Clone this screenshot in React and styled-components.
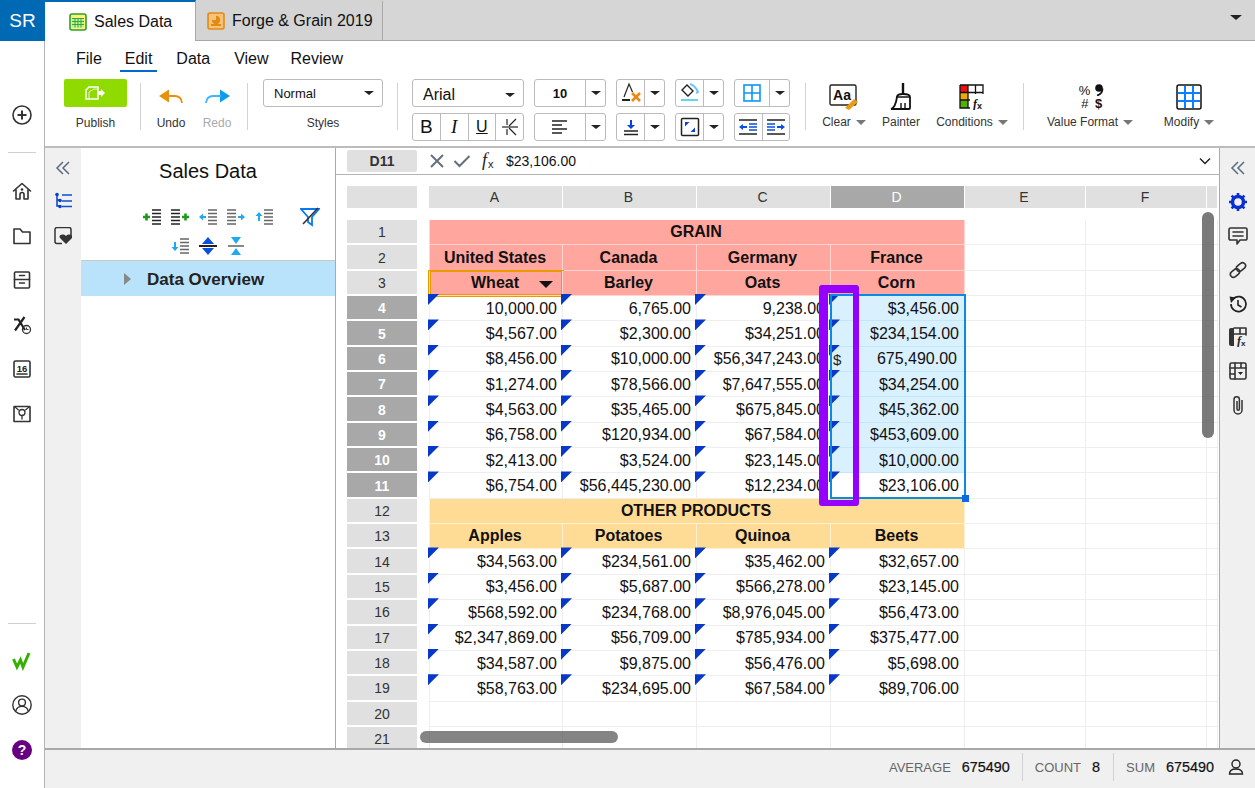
import React from "react";
import styled, { createGlobalStyle } from "styled-components";

const Global = createGlobalStyle`
  html, body { margin: 0; padding: 0; background: #fff; }
  body { font-family: "Liberation Sans", Arial, sans-serif; color: #111; }
  * { box-sizing: border-box; }
  svg { display: block; flex: none; }
`;

const Page = styled.div`display:flex;width:1255px;height:788px;overflow:hidden;background:#fff;`;
const Rail = styled.nav`width:45px;flex:none;display:flex;flex-direction:column;align-items:center;border-right:1px solid #b4b4b4;`;
const Brand = styled.div`width:45px;height:41px;margin-right:-1px;background:#0069b4;color:#fff;font-size:19px;display:flex;align-items:center;justify-content:center;flex:none;`;
const RailGroup = styled.div`display:flex;flex-direction:column;align-items:center;gap:${p => p.$gap || 0}px;margin-top:${p => p.$top || 0}px;`;
const RailRule = styled.div`width:28px;height:1px;background:#d0d0d0;margin-top:${p => p.$top}px;`;
const Main = styled.div`flex:1;min-width:0;display:flex;flex-direction:column;`;
const TabBar = styled.div`height:41px;flex:none;display:flex;background:#d6d6d6;position:relative;`;
const Tab = styled.div`height:41px;display:flex;align-items:center;gap:7px;font-size:16px;width:${p => p.$w}px;padding-left:${p => p.$pad}px;color:#111;white-space:nowrap;
  background:${p => (p.$active ? "#fff" : "#d4d4d4")};
  border-top:2px solid ${p => (p.$active ? "#0069b4" : "#d4d4d4")};
  border-right:1px solid #a8a8a8;
  border-bottom:${p => (p.$active ? "none" : "1px solid #a8a8a8")};`;
const TabFill = styled.div`flex:1;border-bottom:1px solid #a8a8a8;display:flex;justify-content:flex-end;align-items:center;padding:0 13px 6px 0;`;
const Ribbon = styled.header`height:107px;flex:none;border-bottom:2px solid #bcbcbc;`;
const Menu = styled.div`display:flex;height:31px;padding:4px 0 0 31px;gap:0;font-size:16px;`;
const MenuItem = styled.div`height:27px;line-height:27px;margin-right:${p => p.$mr}px;padding:0 ${p => (p.$on ? 5 : 0)}px;margin-left:${p => (p.$on ? -5 : 0)}px;border-bottom:${p => (p.$on ? "2px solid #0069d0" : "none")};`;
const Tools = styled.div`display:flex;align-items:flex-start;padding:7px 0 0 19px;`;
const Sep = styled.div`width:1px;height:47px;background:#d2d2d2;margin:4px ${p => p.$r}px 0 ${p => p.$l}px;flex:none;`;
const Section = styled.div`width:${p => p.$w}px;margin-left:${p => p.$ml || 0}px;display:flex;flex-direction:column;align-items:center;flex:none;`;
const PublishButton = styled.div`width:63px;height:28px;background:#8fdb00;border-radius:2px;display:flex;align-items:center;justify-content:center;`;
const ToolLabel = styled.div`font-size:12px;color:${p => p.$dim ? "#aaa" : "#333"};white-space:nowrap;margin-top:${p => p.$top ?? 9}px;display:flex;align-items:center;gap:5px;`;
const IconSlot = styled.div`height:${p => p.$h || 30}px;margin-top:${p => p.$top || 0}px;display:flex;align-items:center;justify-content:center;`;
const SmallCaret = styled.span`width:0;height:0;border-left:5px solid transparent;border-right:5px solid transparent;border-top:5px solid #777;`;
const Caret = styled.span`width:0;height:0;border-left:${p => p.$s || 5}px solid transparent;border-right:${p => p.$s || 5}px solid transparent;border-top:${p => p.$s ? p.$s - 1 : 4}px solid #222;`;
const SelectBox = styled.div`width:120px;height:28px;border:1px solid #bbb;border-radius:3px;display:flex;align-items:center;justify-content:space-between;padding:0 8px 0 10px;font-size:13px;`;
const FormatGrid = styled.div`display:grid;grid-template-columns:112px 72px 49px 49px 56px;grid-auto-rows:28px;column-gap:10px;row-gap:6px;flex:none;`;
const BoxGroup = styled.div`display:flex;height:28px;border:1px solid #bbb;border-radius:3px;`;
const BoxCell = styled.div`flex:${p => (p.$w ? `0 0 ${p.$w}px` : 1)};display:flex;align-items:center;justify-content:center;font-size:${p => p.$fs || 13}px;font-weight:${p => p.$b ? 700 : 400};&+&{border-left:1px solid #bbb;}`;
const FontBox = styled(BoxGroup)`justify-content:space-between;align-items:center;padding:3px 8px 0 10px;font-size:16px;`;
const ItalicI = styled.span`font-family:"Liberation Serif",serif;font-style:italic;font-size:19px;`;
const UnderU = styled.span`text-decoration:underline;`;
const Body = styled.div`flex:1;min-height:0;display:flex;`;
const SubRail = styled.div`width:36px;flex:none;background:#f0f0f0;display:flex;flex-direction:column;align-items:center;padding-top:13px;gap:17px;`;
const TreePanel = styled.aside`width:255px;flex:none;background:#fff;border-right:1px solid #aaa;`;
const TreeTitle = styled.div`font-size:20px;text-align:center;height:36px;padding-top:11px;line-height:24px;color:#111;`;
const TreeRow = styled.div`display:flex;align-items:center;height:20px;gap:8px;margin-top:${p => p.$top}px;padding-left:${p => p.$pad || 0}px;justify-content:${p => p.$center ? "center" : "flex-start"};`;
const FilterGap = styled.div`margin-left:18px;`;
const TreeItem = styled.div`height:36px;margin-top:4px;background:#b9e3fb;border-top:1px solid #c9c9c9;display:flex;align-items:center;padding:3px 0 0 43px;gap:16px;font-size:17px;font-weight:700;color:#222;`;
const TreeArrow = styled.span`width:0;height:0;border-top:6px solid transparent;border-bottom:6px solid transparent;border-left:7px solid #888;margin-top:-2px;`;
const SheetPane = styled.main`flex:1;min-width:0;display:flex;flex-direction:column;`;
const FormulaBar = styled.div`height:27px;flex:none;display:flex;align-items:center;padding:2px 8px 2px 11px;border-bottom:1px solid #b4b4b4;font-size:14px;`;
const NameBox = styled.div`width:70px;height:22px;background:#e0e0e0;border-radius:2px;font-weight:700;font-size:14px;color:#333;display:flex;align-items:center;justify-content:center;margin-right:12px;`;
const FormulaIcons = styled.div`display:flex;align-items:center;gap:8px;margin-right:9px;`;
const FormulaValue = styled.div`flex:1;`;
const Canvas = styled.div`flex:1;min-height:0;position:relative;overflow:hidden;padding:11px 0 0 11px;`;
const ColRow = styled.div`display:grid;grid-template-columns:82px 134px 134px 134px 134px 121px 121px 11px;height:22px;margin-bottom:12px;`;
const Corner = styled.div`width:70px;background:#e0e0e0;`;
const ColHead = styled.div`background:${p => p.$sel ? "#a8a8a8" : "#e0e0e0"};margin-right:1px;display:flex;align-items:center;justify-content:center;font-size:14px;padding-right:2px;color:${p => p.$sel ? "#fff" : "#333"};`;
const Row = styled.div`display:grid;grid-template-columns:82px 134px 134px 134px 134px 121px 121px 11px;height:25.35px;`;
const RowHead = styled.div`width:70px;height:100%;padding-top:1px;border-bottom:2px solid #fff;background:${p => p.$sel ? "#a8a8a8" : "#e0e0e0"};color:${p => p.$sel ? "#fff" : "#333"};font-size:14px;display:flex;align-items:center;justify-content:center;${p => p.$sel ? "font-weight:700;" : ""}`;
const fills = { pink: "#ffa69f", gold: "#ffdc96", sel: "#d9f0ff" };
const lineColor = p => p.$fill === "pink" ? "#ffd5d1" : p.$fill === "gold" ? "#fff0d2" : p.$fill === "sel" ? "#c4e6fb" : "#eee";
const Cell = styled.div`position:relative;min-width:0;white-space:nowrap;font-size:16px;display:flex;align-items:center;
  padding:${p => p.$num ? "1px 5px 0 0" : "0 2px 0 0"};
  justify-content:${p => p.$num ? "flex-end" : "center"};
  font-weight:${p => p.$head ? 700 : 400};
  grid-column:${p => p.$span ? `span ${p.$span}` : "auto"};
  background:${p => fills[p.$fill] || "transparent"};
  border-right:1px solid ${lineColor};
  border-bottom:1px solid ${lineColor};
  ${p => p.$first ? `border-left:1px solid ${lineColor(p)};` : ""}
  ${p => p.$active ? "box-shadow:0 0 0 1px #e89a00, inset 0 0 0 1px #e89a00;" : ""}`;
const Flag = styled.span`position:absolute;left:-2px;top:-2px;width:11px;height:11px;background:#0838c8;clip-path:polygon(0 0,100% 0,0 100%);z-index:1;`;
const Currency = styled.span`position:absolute;left:2px;font-size:15px;color:#222;`;
const Acct = styled.span`margin-right:2px;`;
const DropCaret = styled.span`position:absolute;right:9px;top:10px;width:0;height:0;border-left:7px solid transparent;border-right:7px solid transparent;border-top:7px solid #111;`;
const Selection = styled.div`position:absolute;left:494px;top:119px;width:136px;height:205px;border:2px solid #0a8ae0;pointer-events:none;z-index:2;`;
const Handle = styled.span`position:absolute;right:-5px;bottom:-5px;width:7px;height:7px;background:#0a6ae8;`;
const Marker = styled.div`position:absolute;left:483px;top:110px;width:40px;height:221px;border-style:solid;border-color:#9500ff;border-width:8px 6px 6px 9px;border-radius:3px;pointer-events:none;z-index:3;`;
const VScroll = styled.div`position:absolute;left:866px;top:37px;width:12px;height:226px;background:rgba(85,85,85,.78);border-radius:6px;z-index:4;`;
const HScroll = styled.div`position:absolute;left:84px;top:556px;width:198px;height:12px;background:rgba(85,85,85,.72);border-radius:6px;z-index:4;`;
const RightRail = styled.div`width:36px;flex:none;background:#f0f0f0;border-left:1px solid #aaa;display:flex;flex-direction:column;align-items:center;padding-top:3px;`;
const RightSlot = styled.div`height:33.9px;flex:none;display:flex;align-items:center;justify-content:center;`;
const Status = styled.footer`height:40px;flex:none;background:#f0f0f0;border-top:2px solid #a8a8a8;display:flex;align-items:center;justify-content:flex-end;padding:0 11px 4px 0;font-size:14px;`;
const StatLabel = styled.span`color:#666;font-size:13px;margin-right:11px;`;
const StatValue = styled.span`color:#111;font-size:14.4px;font-weight:500;-webkit-text-stroke:.2px #111;margin-right:${p => p.$mr}px;`;
const StatRule = styled.span`width:1px;height:28px;background:#d0d0d0;margin-right:12px;`;
const ValueGrid = styled.div`display:grid;grid-template-columns:16px 10px;column-gap:1px;grid-auto-rows:13px;font-size:13px;line-height:13px;color:#111;justify-items:center;`;
const ValueItalic = styled.span`font-style:italic;`;
const ValueBold = styled.span`font-weight:700;`;

const S = ({ w = 24, h = 24, vb, children }) => <svg width={w} height={h} viewBox={vb || `0 0 ${w} ${h}`} fill="none">{children}</svg>;
const line = { stroke: "#333", strokeWidth: 1.6, strokeLinecap: "round", strokeLinejoin: "round" };

const PlusCircle = () => <S w={22} h={22}><circle cx="11" cy="11" r="9" {...line} stroke="#333"/><path d="M11 6.5v9M6.5 11h9" stroke="#333" strokeWidth="2"/></S>;
const Home = () => <S w={20} h={20}><path d="M1.5 10 10 2.5 18.5 10M4 8.5V18h4v-4.5a2 2 0 0 1 4 0V18h4V8.5" {...line}/><circle cx="10" cy="8.5" r="1.3" fill="#333"/></S>;
const Folder = () => <S w={20} h={20}><path d="M2 3h6l2.5 3H18v11.5H2z" {...line}/></S>;
const Archive = () => <S w={20} h={20}><rect x="2.5" y="2" width="15" height="16" rx="1" {...line}/><path d="M2.5 9.5h15M7.5 5.5h5M7.5 13h5" {...line}/></S>;
const XClock = () => <S w={20} h={20}><path d="M2 4.5h4.5L13 15M12.5 2 3 15.5" stroke="#222" strokeWidth="2.2"/><circle cx="14.5" cy="14.5" r="4" stroke="#333" strokeWidth="1.3"/><path d="M14.5 12.5v2h2" stroke="#333"/></S>;
const Cal16 = () => <S w={20} h={20}><rect x="2" y="2" width="16" height="16" rx="1.5" {...line}/><text x="10" y="12.5" textAnchor="middle" fontSize="9.5" fontWeight="700" fill="#222" fontFamily="Liberation Sans">16</text><path d="M5 15h10" {...line}/></S>;
const Bulb = () => <S w={20} h={20}><path d="M2.5 2.5h15a.5.5 0 0 1 .5.5v14.5H2V3a.5.5 0 0 1 .5-.5z" {...line}/><path d="M3 3l3.5 3M17 3l-3.5 3" {...line} strokeWidth="1.1"/><circle cx="10" cy="8.5" r="3" {...line} strokeWidth="1.3"/><path d="M10 11.5V15" {...line} strokeWidth="1.3"/></S>;
const WLogo = () => <S w={20} h={20}><path d="M1.5 8 5 16l3.5-7L11 16l6-14" stroke="#35b000" strokeWidth="3"/></S>;
const UserCircle = () => <S w={22} h={22}><circle cx="11" cy="11" r="9.2" stroke="#333" strokeWidth="1.4"/><circle cx="11" cy="8.5" r="3.4" stroke="#333" strokeWidth="1.4"/><path d="M4.8 17c1-3.5 3.5-4.6 6.2-4.6s5.2 1.1 6.2 4.6" stroke="#333" strokeWidth="1.4"/></S>;
const Help = () => <S w={22} h={22}><circle cx="11" cy="11" r="10" fill="#660080"/><text x="11" y="16" textAnchor="middle" fontSize="14" fontWeight="700" fill="#fff" fontFamily="Liberation Sans">?</text></S>;
const SheetTab = () => <S w={18} h={18}><rect x="1" y="1" width="16" height="16" rx="2" fill="#fff27a" stroke="#2ca02c" strokeWidth="1.6"/><path d="M3 5.5h12v9H3z" fill="#bff0a0"/><path d="M3 5.5h12M3 8.5h12M3 11.5h12M6 5.5v9M9 5.5v9M12 5.5v9" stroke="#2ca02c" strokeWidth=".9"/></S>;
const SlideTab = () => <S w={18} h={18}><rect x="1" y="1" width="16" height="16" rx="2" fill="#f6c27e" stroke="#e38a10" strokeWidth="1.6"/><path d="M9 8V3.8A4.2 4.2 0 1 1 4.8 8z" fill="#e38a10"/><path d="M4 13h10" stroke="#e38a10" strokeWidth="2"/></S>;
const TabChevron = () => <Caret $s={6} />;
const PublishIcon = () => <S w={22} h={14}><path d="M1 13V4l3-3h9v12z" stroke="#fff" strokeWidth="1.5"/><path d="M4 13V6l5-3h4" stroke="#fff" strokeWidth=".8"/><path d="M13 5v4h3v2l4-4-4-4v2z" fill="#fff"/></S>;
const Undo = () => <S w={26} h={18}><path d="M1 8l10-6.500v13z" fill="#e8900a"/><path d="M9 8h8c4 0 6.500 2.500 7 7" stroke="#e8900a" strokeWidth="1.800"/></S>;
const Redo = () => <S w={27} h={18}><path d="M26 8l-10-6.500v13z" fill="#0a9bf5"/><path d="M17 8H9c-4 0-6.500 2.500-7 7" stroke="#38b6ff" strokeWidth="1.800"/></S>;
const ClearFormat = () => <S w={24} h={22}><path d="M5 15 10 2l3.500 8" stroke="#222" strokeWidth="1.200"/><path d="M3 18h8" stroke="#222" strokeWidth="2"/><path d="M13 11l8 8M21 11l-8 8" stroke="#ea8a12" strokeWidth="2.600"/></S>;
const FillBucket = () => <S w={24} h={22}><path d="M9 3l6 6-5 5-6-6z" stroke="#222" strokeWidth="1.400"/><path d="M12 2c3 1 6 3 8 8l-2 1" stroke="#6fc6f2" strokeWidth="2"/><path d="M3 18h17" stroke="#67d3ef" strokeWidth="2"/></S>;
const GridIcon = () => <S w={20} h={20}><rect x="2" y="2" width="16" height="16" stroke="#0a96ff" strokeWidth="1.600"/><path d="M10 2v16M2 10h16" stroke="#0a96ff" strokeWidth="1.600"/></S>;
const Strike = () => <S w={18} h={18}><path d="M6 1v6M6 11v6M15 1 8 8M8 10l7 7" stroke="#222" strokeWidth="1.200"/><path d="M1 9h16" stroke="#222" strokeWidth="1.200"/></S>;
const AlignLeft = () => <S w={18} h={16}><path d="M1 2h15M1 6h10M1 10h15M1 14h10" stroke="#222" strokeWidth="1.500"/></S>;
const VAlign = () => <S w={18} h={18}><path d="M9 2v6" stroke="#0a3fe0" strokeWidth="2"/><path d="M5 7h8l-4 4z" fill="#0a3fe0"/><path d="M2 13h14M2 16.500h14" stroke="#222" strokeWidth="1.500"/></S>;
const CornerBox = () => <S w={20} h={20}><rect x="1.500" y="1.500" width="17" height="17" rx="1" stroke="#222" strokeWidth="1.500"/><path d="M5 5h4.500L5 9.500z" fill="#0a3fe0"/><path d="M15 15h-4.500L15 10.500z" fill="#0a3fe0"/></S>;
const IndentL = () => <S w={20} h={18}><path d="M1 2h18M1 16h18" stroke="#222" strokeWidth="1.600"/><path d="M1 9l4-3v2h4v2H5v2z" fill="#0a50e0"/><path d="M11 6h8M11 9h8M11 12h8" stroke="#0a50e0" strokeWidth="1.400"/></S>;
const IndentR = () => <S w={20} h={18}><path d="M1 2h18M1 16h18" stroke="#222" strokeWidth="1.600"/><path d="M19 9l-4-3v2h-4v2h4v2z" fill="#0a50e0"/><path d="M1 6h8M1 9h8M1 12h8" stroke="#0a50e0" strokeWidth="1.400"/></S>;
const ClearBig = () => <S w={30} h={28}><rect x="1" y="2" width="26" height="20" rx="1.500" stroke="#222" strokeWidth="1.400"/><text x="13" y="17" textAnchor="middle" fontSize="14" fontWeight="700" fill="#111" fontFamily="Liberation Sans">Aa</text><path d="M16 25l9-9 4 3-9 8z" fill="#ea9a14"/></S>;
const Brush = () => <S w={24} h={28}><path d="M14 0v11" stroke="#111" strokeWidth="2.400"/><path d="M8 14c0-2 2-3 6-3s7 1 7 3v11a1 1 0 0 1-1 1H2c3-1 5-5 6-12z" stroke="#111" strokeWidth="1.800"/><path d="M8 14h13M12 20v6M16 20v6" stroke="#111" strokeWidth="1.400"/></S>;
const Conditions = () => <S w={26} h={26}><rect x="1" y="1" width="8" height="7.500" fill="#ee1010"/><rect x="1" y="8.500" width="8" height="7.500" fill="#f0a800"/><rect x="1" y="16" width="8" height="8" fill="#52b000"/><path d="M1 1h23v9M1 1v23h10M9 1v23M16.500 1v9M1 8.500h23M1 16h10" stroke="#111" strokeWidth="1.300"/><text x="14" y="24" fontSize="12" fontStyle="italic" fontWeight="700" fill="#111" fontFamily="Liberation Serif">f</text><text x="18" y="25" fontSize="9" fontWeight="700" fill="#111" fontFamily="Liberation Sans">x</text></S>;
const CommaMark = () => <S w={10} h={12}><circle cx="5" cy="4" r="3.800" fill="#111"/><path d="M8.500 4.500C8.500 8 6.500 10.500 3 11.500" stroke="#111" strokeWidth="1.800"/></S>;
const ValueFormat = () => <ValueGrid><span>%</span><CommaMark /><ValueItalic>#</ValueItalic><ValueBold>$</ValueBold></ValueGrid>;
const Modify = () => <S w={26} h={26}><rect x="1" y="1" width="24" height="24" rx="2" stroke="#111" strokeWidth="1.500"/><path d="M9 2v22M17 2v22M2 9h22M2 17h22" stroke="#0a80ff" strokeWidth="2"/></S>;
const Collapse = () => <S w={16} h={14}><path d="M8 1 2 7l6 6M14 1 8 7l6 6" stroke="#5a6a80" strokeWidth="1.500"/></S>;
const TreeList = () => <S w={18} h={18}><path d="M3 2v12h3M3 8h3" stroke="#0a3fc0" strokeWidth="1.500"/><path d="M8 3h10M8 9h10M8 14.500h10" stroke="#0a50d0" strokeWidth="1.500"/><circle cx="3" cy="2.500" r="1.800" fill="#0a3fc0"/><circle cx="6" cy="8.500" r="1.800" fill="#0a3fc0"/><circle cx="6" cy="14.500" r="1.800" fill="#0a3fc0"/></S>;
const Heart = () => <S w={18} h={18}><path d="M8 16.500H3a2 2 0 0 1-2-2v-12a2 2 0 0 1 2-2h12a2 2 0 0 1 2 2v6" stroke="#333" strokeWidth="1.500"/><path d="M12 17 6 11c-2-3 3-5 6-2 3-3 8-1 6 2z" fill="#333"/></S>;
const Row5 = ({ x = 10 }) => <path d={`M${x} 3h9M${x} 6.500h9M${x} 10h9M${x} 13.500h9M${x} 17h9`} stroke="#666" strokeWidth="1.300"/>;
const AddLeft = () => <S w={20} h={20}><path d="M10 3h9M10 6.500h9M10 10h9M10 13.500h9M10 17h9" stroke="#222" strokeWidth="1.400"/><path d="M4.500 6.500v7M1 10h7" stroke="#1c9a1c" strokeWidth="2.600"/></S>;
const AddRight = () => <S w={20} h={20}><path d="M1 3h9M1 6.500h9M1 10h9M1 13.500h9M1 17h9" stroke="#222" strokeWidth="1.400"/><path d="M15.500 6.500v7M12 10h7" stroke="#1c9a1c" strokeWidth="2.600"/></S>;
const MoveL = () => <S w={20} h={20}><Row5/><path d="M1 10l4-3.500V9h3v2H5v2.500z" fill="#20a8f0"/></S>;
const MoveR = () => <S w={20} h={20}><Row5 x={1}/><path d="M19 10l-4-3.500V9h-3v2h3v2.500z" fill="#20a8f0"/></S>;
const MoveU = () => <S w={20} h={20}><Row5/><path d="M5 5l3.500 4H6v5H4V9H1.500z" fill="#20a8f0"/></S>;
const MoveD = () => <S w={20} h={20}><Row5/><path d="M5 15l3.500-4H6V6H4v5H1.500z" fill="#20a8f0"/></S>;
const Expand = () => <S w={20} h={20}><path d="M1 10h18" stroke="#222" strokeWidth="2"/><path d="M10 1l6 7H4zM10 19l6-7H4z" fill="#0a50e0"/></S>;
const Shrink = () => <S w={20} h={20}><path d="M2 10h16" stroke="#888" strokeWidth="2"/><path d="M10 8 5 1h10zM10 12l5 7H5z" fill="#20a8f0"/></S>;
const FilterOff = () => <S w={20} h={20}><path d="M1 2h18l-7 8v8l-4-3v-5z" stroke="#0a78f0" strokeWidth="1.800"/><path d="M18 1 3 17" stroke="#333" strokeWidth="1.600"/></S>;
const Xmark = () => <S w={16} h={16}><path d="M2 2l12 12M14 2 2 14" stroke="#66707c" strokeWidth="2"/></S>;
const Check = () => <S w={18} h={16}><path d="M1.500 8 6.500 13 16.500 3" stroke="#66707c" strokeWidth="2"/></S>;
const Fx = () => <S w={18} h={20}><text x="3" y="15" fontSize="18" fontStyle="italic" fill="#222" fontFamily="Liberation Serif">f</text><text x="9" y="17" fontSize="11" fill="#222" fontFamily="Liberation Sans">x</text></S>;
const Chevron = () => <S w={12} h={8}><path d="M1 1.500l5 5 5-5" stroke="#222" strokeWidth="1.500"/></S>;
const Gear = () => <S w={20} h={20}><circle cx="10" cy="10" r="5.500" stroke="#0a2fd0" strokeWidth="3.500"/><path d="M10 1v3M10 16v3M1 10h3M16 10h3M3.600 3.600l2 2M14.400 14.400l2 2M16.400 3.600l-2 2M5.600 14.400l-2 2" stroke="#0a2fd0" strokeWidth="2.600"/></S>;
const Comment = () => <S w={20} h={20}><path d="M2.500 2h15A1.500 1.500 0 0 1 19 3.500v9a1.500 1.500 0 0 1-1.500 1.500H12l-3 4v-4H2.500A1.500 1.500 0 0 1 1 12.500v-9A1.500 1.500 0 0 1 2.500 2z" {...line}/><path d="M5 6h10M5 10h10" {...line}/></S>;
const Link = () => <S w={18} h={18}><rect x="1" y="9" width="10" height="6" rx="3" transform="rotate(-40 6 12)" {...line}/><rect x="7" y="3" width="10" height="6" rx="3" transform="rotate(-40 12 6)" {...line}/></S>;
const History = () => <S w={20} h={20}><path d="M3 10a7.500 7.500 0 1 0 2.500-5.500" stroke="#222" strokeWidth="1.700"/><path d="M1.500 2.500l6.500 1L3 9z" fill="#222"/><path d="M10 6v5l3.500 2" stroke="#222" strokeWidth="1.600"/></S>;
const FxTable = () => <S w={20} h={20}><path d="M1 3a2 2 0 0 1 2-2h3v18H3a2 2 0 0 1-2-2z" fill="#333"/><path d="M6 1h12v7M6 7h12M12 1v6" {...line}/><text x="9" y="18" fontSize="12" fontWeight="700" fontStyle="italic" fill="#222" fontFamily="Liberation Serif">f</text><text x="13" y="19" fontSize="8" fontWeight="700" fill="#222" fontFamily="Liberation Sans">x</text></S>;
const TableDrop = () => <S w={18} h={18}><rect x="1" y="1" width="16" height="16" rx="1.500" {...line}/><path d="M1 6h16M1 12h4M6 1v16M12 1v5" {...line}/><path d="M9 10h5l-2.500 3z" fill="#222"/></S>;
const Clip = () => <S w={14} h={20}><path d="M11 5v10a4 4 0 0 1-8 0V4.500a2.700 2.700 0 0 1 5.400 0V14a1.200 1.200 0 0 1-2.400 0V6" stroke="#333" strokeWidth="1.500"/></S>;
const User = () => <S w={16} h={16}><circle cx="8" cy="5" r="4" stroke="#222" strokeWidth="1.400"/><path d="M1.500 15c0-4 3-5 6.500-5s6.500 1 6.500 5z" stroke="#222" strokeWidth="1.400"/></S>;

const D = (a, b, c, d) => [a, b, c, d];
const rows = [
  { n: 1, type: "band", fill: "pink", text: "GRAIN" },
  { n: 2, type: "head", fill: "pink", cols: ["United States", "Canada", "Germany", "France"] },
  { n: 3, type: "head", fill: "pink", cols: ["Wheat", "Barley", "Oats", "Corn"] },
  { n: 4, cols: D("10,000.00", "6,765.00", "9,238.00", "$3,456.00") },
  { n: 5, cols: D("$4,567.00", "$2,300.00", "$34,251.00", "$234,154.00") },
  { n: 6, cols: D("$8,456.00", "$10,000.00", "$56,347,243.00", "675,490.00") },
  { n: 7, cols: D("$1,274.00", "$78,566.00", "$7,647,555.00", "$34,254.00") },
  { n: 8, cols: D("$4,563.00", "$35,465.00", "$675,845.00", "$45,362.00") },
  { n: 9, cols: D("$6,758.00", "$120,934.00", "$67,584.00", "$453,609.00") },
  { n: 10, cols: D("$2,413.00", "$3,524.00", "$23,145.00", "$10,000.00") },
  { n: 11, cols: D("$6,754.00", "$56,445,230.00", "$12,234.00", "$23,106.00") },
  { n: 12, type: "band", fill: "gold", text: "OTHER PRODUCTS" },
  { n: 13, type: "head", fill: "gold", cols: ["Apples", "Potatoes", "Quinoa", "Beets"] },
  { n: 14, cols: D("$34,563.00", "$234,561.00", "$35,462.00", "$32,657.00") },
  { n: 15, cols: D("$3,456.00", "$5,687.00", "$566,278.00", "$23,145.00") },
  { n: 16, cols: D("$568,592.00", "$234,768.00", "$8,976,045.00", "$56,473.00") },
  { n: 17, cols: D("$2,347,869.00", "$56,709.00", "$785,934.00", "$375,477.00") },
  { n: 18, cols: D("$34,587.00", "$9,875.00", "$56,476.00", "$5,698.00") },
  { n: 19, cols: D("$58,763.00", "$234,695.00", "$67,584.00", "$89,706.00") },
  { n: 20 },
  { n: 21 },
];

function SheetRow({ r }) {
  const sel = r.n >= 4 && r.n <= 11;
  const trail = [0, 1, 2].map(i => <Cell key={`t${i}`} />);
  let cells;
  if (r.type === "band") {
    cells = <Cell $span={4} $first $fill={r.fill} $head>{r.text}</Cell>;
  } else if (r.type === "head") {
    cells = r.cols.map((t, i) => {
      const wheat = t === "Wheat";
      return <Cell key={t} $first={i === 0} $fill={r.fill} $head $active={wheat}>{t}{wheat && <DropCaret />}</Cell>;
    });
  } else if (r.cols) {
    cells = r.cols.map((t, i) => {
      const fill = sel && i === 3 && r.n !== 11 ? "sel" : undefined;
      const acct = r.n === 6 && i === 3;
      return (
        <Cell key={i} $first={i === 0} $num $fill={fill}>
          <Flag />
          {acct && <Currency>$</Currency>}
          {acct ? <Acct>{t}</Acct> : t}
        </Cell>
      );
    });
  } else {
    cells = [0, 1, 2, 3].map(i => <Cell key={i} $first={i === 0} />);
  }
  return <Row><RowHead $sel={sel}>{r.n}</RowHead>{cells}{trail}</Row>;
}

const Drop = () => <BoxCell $w={20}><Caret /></BoxCell>;

export default function App() {
  return (
    <Page>
      <Global />
      <Rail>
        <Brand>SR</Brand>
        <RailGroup $top={63}><PlusCircle /></RailGroup>
        <RailRule $top={26} />
        <RailGroup $top={28} $gap={24.5}>
          <Home /><Folder /><Archive /><XClock /><Cal16 /><Bulb />
        </RailGroup>
        <RailRule $top={199} />
        <RailGroup $top={27} $gap={23}>
          <WLogo /><UserCircle /><Help />
        </RailGroup>
      </Rail>
      <Main>
        <TabBar>
          <Tab $active $w={151} $pad={24}><SheetTab />Sales Data</Tab>
          <Tab $w={187} $pad={11}><SlideTab />Forge &amp; Grain 2019</Tab>
          <TabFill><TabChevron /></TabFill>
        </TabBar>
        <Ribbon>
          <Menu>
            <MenuItem $mr={23}>File</MenuItem>
            <MenuItem $on $mr={19}>Edit</MenuItem>
            <MenuItem $mr={24}>Data</MenuItem>
            <MenuItem $mr={22}>View</MenuItem>
            <MenuItem $mr={0}>Review</MenuItem>
          </Menu>
          <Tools>
            <Section $w={63}>
              <PublishButton><PublishIcon /></PublishButton>
              <ToolLabel>Publish</ToolLabel>
            </Section>
            <Sep $l={13} $r={12} />
            <Section $w={36}><IconSlot $h={36}><Undo /></IconSlot><ToolLabel $top={1}>Undo</ToolLabel></Section>
            <Section $w={36} $ml={10}><IconSlot $h={36}><Redo /></IconSlot><ToolLabel $top={1} $dim>Redo</ToolLabel></Section>
            <Sep $l={12} $r={15} />
            <Section $w={120}>
              <SelectBox>Normal<Caret /></SelectBox>
              <ToolLabel>Styles</ToolLabel>
            </Section>
            <Sep $l={14} $r={14} />
            <FormatGrid>
              <FontBox>Arial<Caret /></FontBox>
              <BoxGroup><BoxCell $b $fs={13}>10</BoxCell><Drop /></BoxGroup>
              <BoxGroup><BoxCell><ClearFormat /></BoxCell><Drop /></BoxGroup>
              <BoxGroup><BoxCell><FillBucket /></BoxCell><Drop /></BoxGroup>
              <BoxGroup><BoxCell><GridIcon /></BoxCell><Drop /></BoxGroup>
              <BoxGroup>
                <BoxCell $fs={19}>B</BoxCell>
                <BoxCell><ItalicI>I</ItalicI></BoxCell>
                <BoxCell $fs={16}><UnderU>U</UnderU></BoxCell>
                <BoxCell><Strike /></BoxCell>
              </BoxGroup>
              <BoxGroup><BoxCell><AlignLeft /></BoxCell><Drop /></BoxGroup>
              <BoxGroup><BoxCell><VAlign /></BoxCell><Drop /></BoxGroup>
              <BoxGroup><BoxCell><CornerBox /></BoxCell><Drop /></BoxGroup>
              <BoxGroup><BoxCell><IndentL /></BoxCell><BoxCell><IndentR /></BoxCell></BoxGroup>
            </FormatGrid>
            <Sep $l={15} $r={10} />
            <Section $w={56}><IconSlot $top={3}><ClearBig /></IconSlot><ToolLabel $top={3}>Clear<SmallCaret /></ToolLabel></Section>
            <Section $w={58}><IconSlot $top={3}><Brush /></IconSlot><ToolLabel $top={3}>Painter</ToolLabel></Section>
            <Section $w={84}><IconSlot $top={3}><Conditions /></IconSlot><ToolLabel $top={3}>Conditions<SmallCaret /></ToolLabel></Section>
            <Sep $l={9} $r={10} />
            <Section $w={112}><IconSlot $top={3}><ValueFormat /></IconSlot><ToolLabel $top={3}>Value Format<SmallCaret /></ToolLabel></Section>
            <Section $w={58} $ml={14}><IconSlot $top={3}><Modify /></IconSlot><ToolLabel $top={3}>Modify<SmallCaret /></ToolLabel></Section>
          </Tools>
        </Ribbon>
        <Body>
          <SubRail>
            <Collapse /><TreeList /><Heart />
          </SubRail>
          <TreePanel>
            <TreeTitle>Sales Data</TreeTitle>
            <TreeRow $top={23} $pad={61}>
              <AddLeft /><AddRight /><MoveL /><MoveR /><MoveU />
              <FilterGap><FilterOff /></FilterGap>
            </TreeRow>
            <TreeRow $top={9} $center>
              <MoveD /><Expand /><Shrink />
            </TreeRow>
            <TreeItem><TreeArrow />Data Overview</TreeItem>
          </TreePanel>
          <SheetPane>
            <FormulaBar>
              <NameBox>D11</NameBox>
              <FormulaIcons><Xmark /><Check /><Fx /></FormulaIcons>
              <FormulaValue>$23,106.00</FormulaValue>
              <Chevron />
            </FormulaBar>
            <Canvas>
              <ColRow>
                <Corner />
                {["A", "B", "C", "D", "E", "F", ""].map(c => <ColHead key={c} $sel={c === "D"}>{c}</ColHead>)}
              </ColRow>
              {rows.map(r => <SheetRow key={r.n} r={r} />)}
              <Selection><Handle /></Selection>
              <Marker />
              <VScroll />
              <HScroll />
            </Canvas>
          </SheetPane>
          <RightRail>
            {[Collapse, Gear, Comment, Link, History, FxTable, TableDrop, Clip].map((I, i) => <RightSlot key={i}><I /></RightSlot>)}
          </RightRail>
        </Body>
        <Status>
          <StatLabel>AVERAGE</StatLabel><StatValue $mr={12}>675490</StatValue><StatRule />
          <StatLabel>COUNT</StatLabel><StatValue $mr={13}>8</StatValue><StatRule />
          <StatLabel>SUM</StatLabel><StatValue $mr={14}>675490</StatValue>
          <User />
        </Status>
      </Main>
    </Page>
  );
}
